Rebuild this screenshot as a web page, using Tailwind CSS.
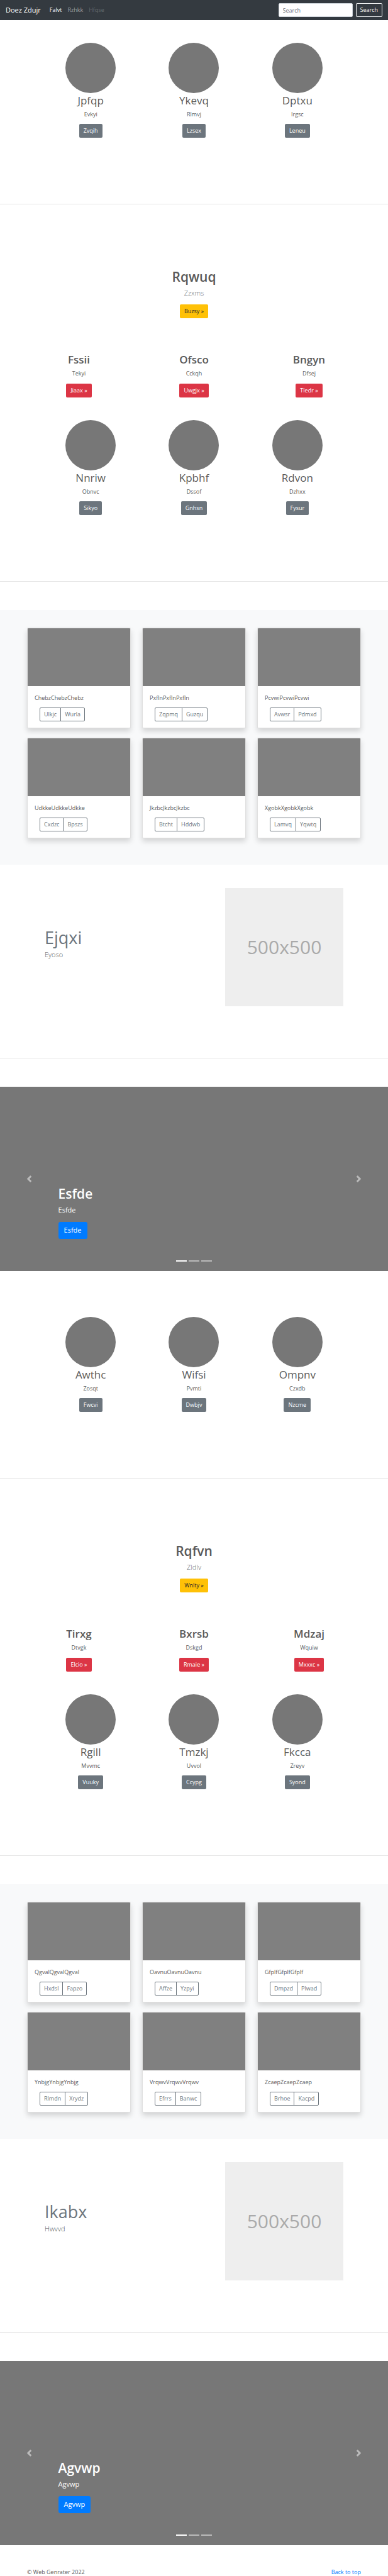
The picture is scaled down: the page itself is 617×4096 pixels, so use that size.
<!DOCTYPE html>
<html lang="en">
<head>
<meta charset="utf-8">
<meta name="viewport" content="width=device-width, initial-scale=1">
<title>Doez Zdujr</title>
<script src="https://cdn.jsdelivr.net/npm/@tailwindcss/browser@4"></script>
</head>
<body class="bg-white font-['Open_Sans','Noto_Sans',sans-serif] text-[9px] leading-[14px] text-[#5a5a5a]">

<header class="flex h-8 items-center bg-[#343a40] px-[9px] text-white">
  <a href="#" class="text-[11px]">Doez Zdujr</a>
  <nav class="ml-[14px] flex gap-[9px]">
    <a href="#">Falvt</a>
    <a href="#" class="text-white/50">Rzhkk</a>
    <a href="#" class="text-white/25">Hfqse</a>
  </nav>
  <form class="ml-auto flex gap-[5px]">
    <input type="search" aria-label="Search" placeholder="Search" class="h-[22px] w-[118px] rounded-[2px] border border-[#ced4da] bg-white px-[6px] text-[#495057] placeholder:text-[#6c757d]">
    <button type="button" class="h-[22px] rounded-[2px] border border-[#f8f9fa] px-[6px] text-[#f8f9fa]">Search</button>
  </form>
</header>

<main>
  <!-- Round profiles -->
  <section class="grid grid-cols-3 border-b border-black/10 px-[62px] pt-9 pb-[105px] text-center [&_h2]:mt-px [&_h2]:text-[17px] [&_h2]:leading-[22px] [&_p]:mt-1">
    <div class="flex flex-col items-center">
      <div class="size-20 rounded-full bg-[#777]"></div>
      <h2>Jpfqp</h2>
      <p>Evkyi</p>
      <a href="#" class="mt-2 rounded-[2px] bg-[#6c757d] px-[7px] py-1 text-white">Zvqih</a>
    </div>
    <div class="flex flex-col items-center">
      <div class="size-20 rounded-full bg-[#777]"></div>
      <h2>Ykevq</h2>
      <p>Rlmvj</p>
      <a href="#" class="mt-2 rounded-[2px] bg-[#6c757d] px-[7px] py-1 text-white">Lzsex</a>
    </div>
    <div class="flex flex-col items-center">
      <div class="size-20 rounded-full bg-[#777]"></div>
      <h2>Dptxu</h2>
      <p>Irgsc</p>
      <a href="#" class="mt-2 rounded-[2px] bg-[#6c757d] px-[7px] py-1 text-white">Leneu</a>
    </div>
  </section>

  <!-- Headline -->
  <section class="flex flex-col items-center pt-[101px] text-center">
    <h1 class="text-[21px] leading-7 font-semibold">Rqwuq</h1>
    <p class="mt-1 text-[11px] leading-4 font-light text-[#6c757d]">Zzxms</p>
    <a href="#" class="mt-[10px] rounded-[2px] bg-[#ffc107] px-[7px] py-1 text-[#212529]">Buzsy »</a>
  </section>
  <section class="grid grid-cols-3 px-[34px] pt-[55px] text-center [&_h2]:text-[17px] [&_h2]:leading-[22px] [&_h2]:font-semibold [&_p]:mt-1">
    <div class="flex flex-col items-center">
      <h2>Fssii</h2>
      <p>Tekyi</p>
      <a href="#" class="mt-[9px] rounded-[2px] bg-[#dc3545] px-[7px] py-1 text-white">Jiaax »</a>
    </div>
    <div class="flex flex-col items-center">
      <h2>Ofsco</h2>
      <p>Cckqh</p>
      <a href="#" class="mt-[9px] rounded-[2px] bg-[#dc3545] px-[7px] py-1 text-white">Uwgjx »</a>
    </div>
    <div class="flex flex-col items-center">
      <h2>Bngyn</h2>
      <p>Dfsej</p>
      <a href="#" class="mt-[9px] rounded-[2px] bg-[#dc3545] px-[7px] py-1 text-white">Tledr »</a>
    </div>
  </section>
  <section class="mb-[45px] grid grid-cols-3 border-b border-black/10 px-[62px] pt-9 pb-[105px] text-center [&_h2]:mt-px [&_h2]:text-[17px] [&_h2]:leading-[22px] [&_p]:mt-1">
    <div class="flex flex-col items-center">
      <div class="size-20 rounded-full bg-[#777]"></div>
      <h2>Nnriw</h2>
      <p>Obnvc</p>
      <a href="#" class="mt-2 rounded-[2px] bg-[#6c757d] px-[7px] py-1 text-white">Sikyo</a>
    </div>
    <div class="flex flex-col items-center">
      <div class="size-20 rounded-full bg-[#777]"></div>
      <h2>Kpbhf</h2>
      <p>Dssof</p>
      <a href="#" class="mt-2 rounded-[2px] bg-[#6c757d] px-[7px] py-1 text-white">Gnhsn</a>
    </div>
    <div class="flex flex-col items-center">
      <div class="size-20 rounded-full bg-[#777]"></div>
      <h2>Rdvon</h2>
      <p>Dzhxx</p>
      <a href="#" class="mt-2 rounded-[2px] bg-[#6c757d] px-[7px] py-1 text-white">Fysur</a>
    </div>
  </section>

  <!-- Album -->
  <section class="grid grid-cols-3 gap-x-[18px] gap-y-[15px] bg-[#f8f9fa] px-[43px] pt-7 pb-[42px] [&_article]:rounded-[2px] [&_article]:border [&_article]:border-black/12 [&_article]:bg-white [&_article]:pb-[10px] [&_article]:shadow-[0_5px_9px_rgba(0,0,0,0.15)] [&_button]:px-[6px] [&_button]:py-[3px] [&_p]:mx-[11px] [&_p]:mt-3">
    <article>
      <div class="h-[92px] rounded-t-[1px] bg-[#808080]"></div>
      <p>ChebzChebzChebz</p>
      <div class="mt-2 ml-[19px] inline-flex divide-x divide-[#6c757d] rounded-[2px] border border-[#6c757d] align-top text-[#6c757d]"><button type="button">Ulkjc</button><button type="button">Wurla</button></div>
    </article>
    <article>
      <div class="h-[92px] rounded-t-[1px] bg-[#808080]"></div>
      <p>PxflnPxflnPxfln</p>
      <div class="mt-2 ml-[19px] inline-flex divide-x divide-[#6c757d] rounded-[2px] border border-[#6c757d] align-top text-[#6c757d]"><button type="button">Zqpmq</button><button type="button">Guzqu</button></div>
    </article>
    <article>
      <div class="h-[92px] rounded-t-[1px] bg-[#808080]"></div>
      <p>PcvwiPcvwiPcvwi</p>
      <div class="mt-2 ml-[19px] inline-flex divide-x divide-[#6c757d] rounded-[2px] border border-[#6c757d] align-top text-[#6c757d]"><button type="button">Avwsr</button><button type="button">Pdmxd</button></div>
    </article>
    <article>
      <div class="h-[92px] rounded-t-[1px] bg-[#808080]"></div>
      <p>UdkkeUdkkeUdkke</p>
      <div class="mt-2 ml-[19px] inline-flex divide-x divide-[#6c757d] rounded-[2px] border border-[#6c757d] align-top text-[#6c757d]"><button type="button">Cxdzc</button><button type="button">Bpszs</button></div>
    </article>
    <article>
      <div class="h-[92px] rounded-t-[1px] bg-[#808080]"></div>
      <p>JkzbcJkzbcJkzbc</p>
      <div class="mt-2 ml-[19px] inline-flex divide-x divide-[#6c757d] rounded-[2px] border border-[#6c757d] align-top text-[#6c757d]"><button type="button">Btcht</button><button type="button">Hddwb</button></div>
    </article>
    <article>
      <div class="h-[92px] rounded-t-[1px] bg-[#808080]"></div>
      <p>XgobkXgobkXgobk</p>
      <div class="mt-2 ml-[19px] inline-flex divide-x divide-[#6c757d] rounded-[2px] border border-[#6c757d] align-top text-[#6c757d]"><button type="button">Lamvq</button><button type="button">Yqwtq</button></div>
    </article>
  </section>

  <!-- Feature -->
  <section class="mb-[45px] flex justify-between border-b border-black/10 px-[71px] pt-[37px] pb-[82px]">
    <div class="pt-[62px]">
      <h2 class="text-[27px] leading-[34px] text-[#6c757d]">Ejqxi</h2>
      <p class="mt-[2px] text-[11px] leading-4 font-light">Eyoso</p>
    </div>
    <div class="flex size-[188px] items-center justify-center bg-[#eee] text-[30px] leading-9 text-[#aaa]">500x500</div>
  </section>

  <!-- Carousel -->
  <section class="relative flex h-[293px] flex-col items-start justify-end bg-[#777] px-[15%] pb-[51px] text-[11px] leading-4 text-white">
    <h2 class="text-[21px] leading-7 font-semibold">Esfde</h2>
    <p class="mt-1">Esfde</p>
    <a href="#" class="mt-[11px] rounded-[3px] bg-[#007bff] px-[9px] pt-[5px] pb-[6px]">Esfde</a>
    <button type="button" aria-label="Previous" class="absolute inset-y-0 left-0 flex w-[15%] items-center justify-center opacity-50">
      <svg viewBox="0 0 8 8" class="size-[11px] fill-white"><path d="M5.25 0l-4 4 4 4 1.5-1.5-2.5-2.5 2.5-2.5-1.5-1.5z"/></svg>
    </button>
    <button type="button" aria-label="Next" class="absolute inset-y-0 right-0 flex w-[15%] items-center justify-center opacity-50">
      <svg viewBox="0 0 8 8" class="size-[11px] fill-white"><path d="M2.75 0l-1.5 1.5 2.5 2.5-2.5 2.5 1.5 1.5 4-4-4-4z"/></svg>
    </button>
    <div class="absolute inset-x-0 bottom-[15px] flex justify-center gap-[3px]">
      <span class="h-[2px] w-[17px] bg-white"></span>
      <span class="h-[2px] w-[17px] bg-white/50"></span>
      <span class="h-[2px] w-[17px] bg-white/50"></span>
    </div>
  </section>

  <!-- Round profiles -->
  <section class="grid grid-cols-3 border-b border-black/10 px-[62px] pt-[73px] pb-[105px] text-center [&_h2]:mt-px [&_h2]:text-[17px] [&_h2]:leading-[22px] [&_p]:mt-1">
    <div class="flex flex-col items-center">
      <div class="size-20 rounded-full bg-[#777]"></div>
      <h2>Awthc</h2>
      <p>Zosqt</p>
      <a href="#" class="mt-2 rounded-[2px] bg-[#6c757d] px-[7px] py-1 text-white">Fwcvi</a>
    </div>
    <div class="flex flex-col items-center">
      <div class="size-20 rounded-full bg-[#777]"></div>
      <h2>Wifsi</h2>
      <p>Pvmti</p>
      <a href="#" class="mt-2 rounded-[2px] bg-[#6c757d] px-[7px] py-1 text-white">Dwbjv</a>
    </div>
    <div class="flex flex-col items-center">
      <div class="size-20 rounded-full bg-[#777]"></div>
      <h2>Ompnv</h2>
      <p>Czxdb</p>
      <a href="#" class="mt-2 rounded-[2px] bg-[#6c757d] px-[7px] py-1 text-white">Nzcme</a>
    </div>
  </section>

  <!-- Headline -->
  <section class="flex flex-col items-center pt-[101px] text-center">
    <h1 class="text-[21px] leading-7 font-semibold">Rqfvn</h1>
    <p class="mt-1 text-[11px] leading-4 font-light text-[#6c757d]">Zldlv</p>
    <a href="#" class="mt-[10px] rounded-[2px] bg-[#ffc107] px-[7px] py-1 text-[#212529]">Wnlty »</a>
  </section>
  <section class="grid grid-cols-3 px-[34px] pt-[55px] text-center [&_h2]:text-[17px] [&_h2]:leading-[22px] [&_h2]:font-semibold [&_p]:mt-1">
    <div class="flex flex-col items-center">
      <h2>Tirxg</h2>
      <p>Dtvgk</p>
      <a href="#" class="mt-[9px] rounded-[2px] bg-[#dc3545] px-[7px] py-1 text-white">Elcio »</a>
    </div>
    <div class="flex flex-col items-center">
      <h2>Bxrsb</h2>
      <p>Dskgd</p>
      <a href="#" class="mt-[9px] rounded-[2px] bg-[#dc3545] px-[7px] py-1 text-white">Rmaie »</a>
    </div>
    <div class="flex flex-col items-center">
      <h2>Mdzaj</h2>
      <p>Wquiw</p>
      <a href="#" class="mt-[9px] rounded-[2px] bg-[#dc3545] px-[7px] py-1 text-white">Mxxxc »</a>
    </div>
  </section>
  <section class="mb-[45px] grid grid-cols-3 border-b border-black/10 px-[62px] pt-9 pb-[105px] text-center [&_h2]:mt-px [&_h2]:text-[17px] [&_h2]:leading-[22px] [&_p]:mt-1">
    <div class="flex flex-col items-center">
      <div class="size-20 rounded-full bg-[#777]"></div>
      <h2>Rgill</h2>
      <p>Mvvmc</p>
      <a href="#" class="mt-2 rounded-[2px] bg-[#6c757d] px-[7px] py-1 text-white">Vuuky</a>
    </div>
    <div class="flex flex-col items-center">
      <div class="size-20 rounded-full bg-[#777]"></div>
      <h2>Tmzkj</h2>
      <p>Uvvol</p>
      <a href="#" class="mt-2 rounded-[2px] bg-[#6c757d] px-[7px] py-1 text-white">Ccypg</a>
    </div>
    <div class="flex flex-col items-center">
      <div class="size-20 rounded-full bg-[#777]"></div>
      <h2>Fkcca</h2>
      <p>Zreyv</p>
      <a href="#" class="mt-2 rounded-[2px] bg-[#6c757d] px-[7px] py-1 text-white">Syond</a>
    </div>
  </section>

  <!-- Album -->
  <section class="grid grid-cols-3 gap-x-[18px] gap-y-[15px] bg-[#f8f9fa] px-[43px] pt-7 pb-[42px] [&_article]:rounded-[2px] [&_article]:border [&_article]:border-black/12 [&_article]:bg-white [&_article]:pb-[10px] [&_article]:shadow-[0_5px_9px_rgba(0,0,0,0.15)] [&_button]:px-[6px] [&_button]:py-[3px] [&_p]:mx-[11px] [&_p]:mt-3">
    <article>
      <div class="h-[92px] rounded-t-[1px] bg-[#808080]"></div>
      <p>QgvalQgvalQgval</p>
      <div class="mt-2 ml-[19px] inline-flex divide-x divide-[#6c757d] rounded-[2px] border border-[#6c757d] align-top text-[#6c757d]"><button type="button">Hxdsl</button><button type="button">Fapzo</button></div>
    </article>
    <article>
      <div class="h-[92px] rounded-t-[1px] bg-[#808080]"></div>
      <p>OavnuOavnuOavnu</p>
      <div class="mt-2 ml-[19px] inline-flex divide-x divide-[#6c757d] rounded-[2px] border border-[#6c757d] align-top text-[#6c757d]"><button type="button">Affze</button><button type="button">Yzpyi</button></div>
    </article>
    <article>
      <div class="h-[92px] rounded-t-[1px] bg-[#808080]"></div>
      <p>GfplfGfplfGfplf</p>
      <div class="mt-2 ml-[19px] inline-flex divide-x divide-[#6c757d] rounded-[2px] border border-[#6c757d] align-top text-[#6c757d]"><button type="button">Dmpzd</button><button type="button">Plwad</button></div>
    </article>
    <article>
      <div class="h-[92px] rounded-t-[1px] bg-[#808080]"></div>
      <p>YnbjgYnbjgYnbjg</p>
      <div class="mt-2 ml-[19px] inline-flex divide-x divide-[#6c757d] rounded-[2px] border border-[#6c757d] align-top text-[#6c757d]"><button type="button">Rlmdn</button><button type="button">Xrydz</button></div>
    </article>
    <article>
      <div class="h-[92px] rounded-t-[1px] bg-[#808080]"></div>
      <p>VrqwvVrqwvVrqwv</p>
      <div class="mt-2 ml-[19px] inline-flex divide-x divide-[#6c757d] rounded-[2px] border border-[#6c757d] align-top text-[#6c757d]"><button type="button">Efrrs</button><button type="button">Banwc</button></div>
    </article>
    <article>
      <div class="h-[92px] rounded-t-[1px] bg-[#808080]"></div>
      <p>ZcaepZcaepZcaep</p>
      <div class="mt-2 ml-[19px] inline-flex divide-x divide-[#6c757d] rounded-[2px] border border-[#6c757d] align-top text-[#6c757d]"><button type="button">Brhoe</button><button type="button">Kacpd</button></div>
    </article>
  </section>

  <!-- Feature -->
  <section class="mb-[45px] flex justify-between border-b border-black/10 px-[71px] pt-[37px] pb-[82px]">
    <div class="pt-[62px]">
      <h2 class="text-[27px] leading-[34px] text-[#6c757d]">Ikabx</h2>
      <p class="mt-[2px] text-[11px] leading-4 font-light">Hwvvd</p>
    </div>
    <div class="flex size-[188px] items-center justify-center bg-[#eee] text-[30px] leading-9 text-[#aaa]">500x500</div>
  </section>

  <!-- Carousel -->
  <section class="relative flex h-[293px] flex-col items-start justify-end bg-[#777] px-[15%] pb-[51px] text-[11px] leading-4 text-white">
    <h2 class="text-[21px] leading-7 font-semibold">Agvwp</h2>
    <p class="mt-1">Agvwp</p>
    <a href="#" class="mt-[11px] rounded-[3px] bg-[#007bff] px-[9px] pt-[5px] pb-[6px]">Agvwp</a>
    <button type="button" aria-label="Previous" class="absolute inset-y-0 left-0 flex w-[15%] items-center justify-center opacity-50">
      <svg viewBox="0 0 8 8" class="size-[11px] fill-white"><path d="M5.25 0l-4 4 4 4 1.5-1.5-2.5-2.5 2.5-2.5-1.5-1.5z"/></svg>
    </button>
    <button type="button" aria-label="Next" class="absolute inset-y-0 right-0 flex w-[15%] items-center justify-center opacity-50">
      <svg viewBox="0 0 8 8" class="size-[11px] fill-white"><path d="M2.75 0l-1.5 1.5 2.5 2.5-2.5 2.5 1.5 1.5 4-4-4-4z"/></svg>
    </button>
    <div class="absolute inset-x-0 bottom-[15px] flex justify-center gap-[3px]">
      <span class="h-[2px] w-[17px] bg-white"></span>
      <span class="h-[2px] w-[17px] bg-white/50"></span>
      <span class="h-[2px] w-[17px] bg-white/50"></span>
    </div>
  </section>
</main>

<footer class="flex justify-between px-[43px] pt-[37px] leading-3">
  <p>© Web Genrater 2022</p>
  <a href="#" class="text-[#007bff]">Back to top</a>
</footer>

</body>
</html>
